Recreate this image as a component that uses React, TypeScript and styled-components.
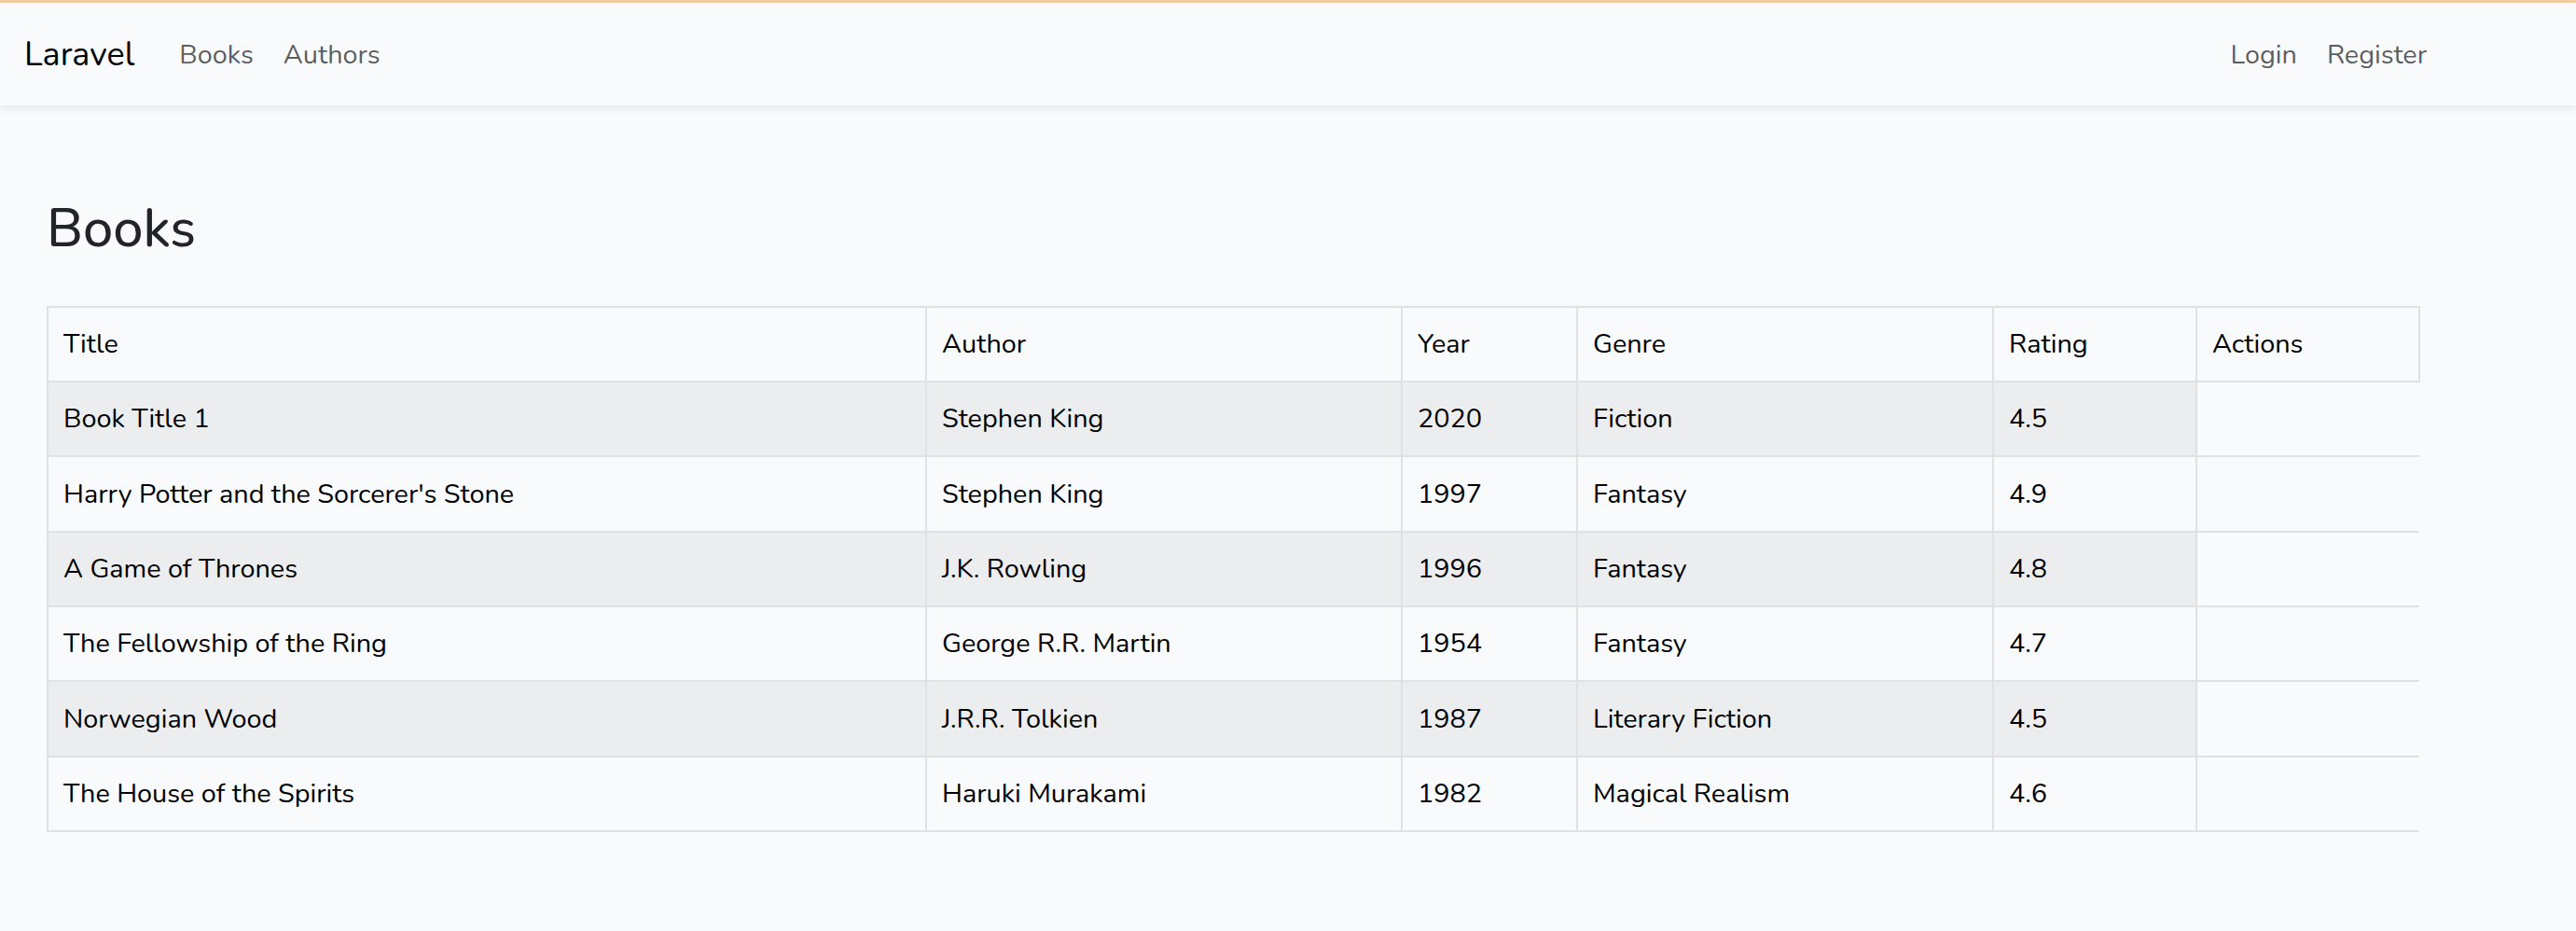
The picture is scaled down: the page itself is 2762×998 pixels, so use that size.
import React from "react";
import styled, { createGlobalStyle } from "styled-components";

const GlobalStyle = createGlobalStyle`
  body {
    margin: 0;
    background-color: #f8fafc;
    font-family: "Nunito", "Lato", "Noto Sans", sans-serif;
    font-size: 28.8px;
    line-height: 1.6;
    color: #212529;
  }
`;

const S = {
  Page: styled.div`
    min-height: 998px;
    border-top: 3px solid #f2cea2;
    box-sizing: border-box;
  `,
  Navbar: styled.nav`
    padding: 17px 0 15px;
    background-color: #f8fafc;
    box-shadow: 0 4px 8px rgba(0, 0, 0, 0.075);
    position: relative;
  `,
  NavInner: styled.div`
    width: 2592px;
    margin-left: 26px;
    display: flex;
    align-items: center;
  `,
  Brand: styled.a`
    font-size: 36px;
    padding: 10px 0;
    margin-right: 32px;
    color: #000;
    text-decoration: none;
  `,
  NavList: styled.ul<{ $end?: boolean }>`
    display: flex;
    list-style: none;
    margin: 0;
    padding: 0;
    margin-left: ${(p) => (p.$end ? "auto" : "0")};
  `,
  NavLink: styled.a`
    display: block;
    padding: 16px;
    color: rgba(0, 0, 0, 0.65);
    text-decoration: none;
  `,
  Main: styled.main`
    padding-left: 50px;
  `,
  Heading: styled.h2`
    margin: 98px 0 47.5px;
    font-size: 57.6px;
    font-weight: 500;
    line-height: 1.2;
    color: #212529;
  `,
  Table: styled.table`
    width: 2543px;
    border-collapse: collapse;
    table-layout: fixed;
    color: #000;
  `,
  Row: styled.tr`
    border-top: 2px solid #dee2e6;
    border-bottom: 2px solid #dee2e6;
  `,
  HeadCell: styled.th`
    padding: 16.15px 16px;
    font-weight: 400;
    text-align: left;
    border-left: 2px solid #dee2e6;
    border-right: 2px solid #dee2e6;
  `,
  Cell: styled.td<{ $striped?: boolean }>`
    padding: 16.15px 16px;
    border-left: 2px solid #dee2e6;
    border-right: 2px solid #dee2e6;
    background-color: ${(p) => (p.$striped ? "#ecedef" : "transparent")};
  `,
};

const columns = [
  { label: "Title", width: 942 },
  { label: "Author", width: 510 },
  { label: "Year", width: 188 },
  { label: "Genre", width: 446 },
  { label: "Rating", width: 218 },
  { label: "Actions", width: 239 },
];

const books = [
  ["Book Title 1", "Stephen King", "2020", "Fiction", "4.5"],
  ["Harry Potter and the Sorcerer's Stone", "Stephen King", "1997", "Fantasy", "4.9"],
  ["A Game of Thrones", "J.K. Rowling", "1996", "Fantasy", "4.8"],
  ["The Fellowship of the Ring", "George R.R. Martin", "1954", "Fantasy", "4.7"],
  ["Norwegian Wood", "J.R.R. Tolkien", "1987", "Literary Fiction", "4.5"],
  ["The House of the Spirits", "Haruki Murakami", "1982", "Magical Realism", "4.6"],
];

const App = () => {
  return (
    <>
      <GlobalStyle />
      <S.Page>
        <S.Navbar>
          <S.NavInner>
            <S.Brand href="#">Laravel</S.Brand>
            <S.NavList>
              <li>
                <S.NavLink href="#">Books</S.NavLink>
              </li>
              <li>
                <S.NavLink href="#">Authors</S.NavLink>
              </li>
            </S.NavList>
            <S.NavList $end>
              <li>
                <S.NavLink href="#">Login</S.NavLink>
              </li>
              <li>
                <S.NavLink href="#">Register</S.NavLink>
              </li>
            </S.NavList>
          </S.NavInner>
        </S.Navbar>

        <S.Main>
          <S.Heading>Books</S.Heading>
          <S.Table>
            <colgroup>
              {columns.map((c) => (
                <col key={c.label} style={{ width: c.width }} />
              ))}
            </colgroup>
            <thead>
              <S.Row>
                {columns.map((c) => (
                  <S.HeadCell key={c.label}>{c.label}</S.HeadCell>
                ))}
              </S.Row>
            </thead>
            <tbody>
              {books.map((book, i) => (
                <S.Row key={book[0]}>
                  {book.map((value, j) => (
                    <S.Cell key={j} $striped={i % 2 === 0}>
                      {value}
                    </S.Cell>
                  ))}
                </S.Row>
              ))}
            </tbody>
          </S.Table>
        </S.Main>
      </S.Page>
    </>
  );
};

export default App;
